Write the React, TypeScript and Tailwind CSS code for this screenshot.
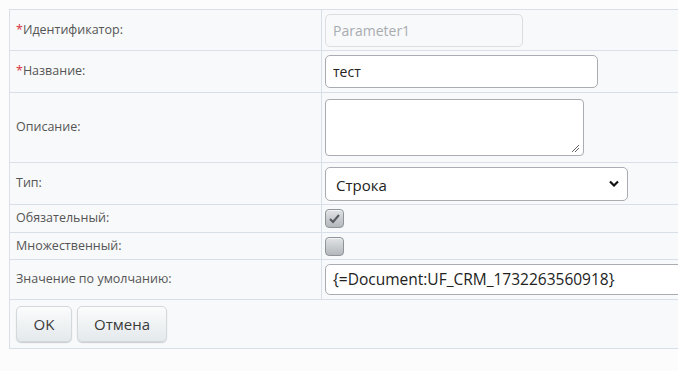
import React from "react";

const font = { fontFamily: '"Open Sans", "Noto Sans", sans-serif' };

function Row({
  label,
  required,
  h,
  children,
}: {
  label: string;
  required?: boolean;
  h: string;
  children: React.ReactNode;
}) {
  return (
    <div className={`flex border-b border-[#d9dfe8] ${h}`}>
      <div className="w-[312px] shrink-0 border-r border-[#d9dfe8] pl-[6px] flex items-center text-[12.5px] text-[#555]">
        {required && <span className="text-[#d9333f]">*</span>}
        {label}
      </div>
      <div className="flex-1 pl-[3px] flex items-center">{children}</div>
    </div>
  );
}

function Checkbox({ checked }: { checked?: boolean }) {
  return (
    <div className="w-[19px] h-[19px] rounded-[4px] border border-[#8f9499] bg-gradient-to-b from-[#e1e3e5] to-[#b4b8bc] flex items-center justify-center shadow-[inset_0_1px_0_#f3f4f5]">
      {checked && (
        <svg width="13" height="11" viewBox="0 0 13 11">
          <path d="M2 6 L5 9 L11 2" fill="none" stroke="#55595d" strokeWidth="2" />
        </svg>
      )}
    </div>
  );
}

export default function App() {
  return (
    <div className="w-[678px] h-[371px] overflow-hidden bg-[#fcfcfd] pt-[9px] pl-[9px]" style={font}>
      <div className="w-[720px] bg-[#f8f9fa] border-t border-l border-[#d9dfe8]">
        <Row label="Идентификатор:" required h="h-[41px]">
          <div className="w-[198px] h-[33px] mt-[1px] rounded-[5px] border border-[#dcdfe2] bg-[#f8f9fa] px-[7px] flex items-center text-[14px] text-[#a8acb0]">
            Parameter1
          </div>
        </Row>
        <Row label="Название:" required h="h-[42px]">
          <div className="w-[273px] h-[33px] rounded-[5px] border border-[#a9adb1] bg-white px-[7px] flex items-center text-[14px] text-[#222]">
            тест
          </div>
        </Row>
        <Row label="Описание:" h="h-[70px]">
          <div className="relative w-[259px] h-[57px] rounded-[4px] border border-[#a9adb1] bg-white">
            <svg className="absolute right-[3px] bottom-[2px]" width="9" height="9" viewBox="0 0 9 9">
              <path d="M1 8 L8 1 M4 8 L8 4" stroke="#666" strokeWidth="1" />
            </svg>
          </div>
        </Row>
        <Row label="Тип:" h="h-[42px]">
          <div className="w-[303px] h-[34px] rounded-[5px] border border-[#a9adb1] bg-white pl-[10px] pr-[8px] flex items-center justify-between text-[15px] text-[#222]">
            <span className="mt-[4px]">Строка</span>
            <svg width="10" height="7" viewBox="0 0 10 7">
              <path d="M1 1.5 L5 5.5 L9 1.5" fill="none" stroke="#111" strokeWidth="2.2" />
            </svg>
          </div>
        </Row>
        <Row label="Обязательный:" h="h-[28px]">
          <Checkbox checked />
        </Row>
        <Row label="Множественный:" h="h-[27px]">
          <Checkbox />
        </Row>
        <Row label="Значение по умолчанию:" h="h-[40px]">
          <div className="w-[400px] h-[31px] rounded-[5px] border border-[#a9adb1] bg-white px-[7px] flex items-center text-[15.5px] text-[#222]">
            {"{=Document:UF_CRM_1732263560918}"}
          </div>
        </Row>
        <div className="h-[49px] border-b border-[#d9dfe8] pl-[6px] flex items-center gap-[5px]">
          <button className="w-[56px] h-[36px] rounded-[5px] border border-[#d3d8dc] bg-gradient-to-b from-[#fbfcfc] to-[#e4e9ec] text-[15px] font-medium text-[#3a3a3a] shadow-[0_1px_1px_#c8cdd1]">
            OK
          </button>
          <button className="w-[90px] h-[36px] rounded-[5px] border border-[#d3d8dc] bg-gradient-to-b from-[#fbfcfc] to-[#e4e9ec] text-[15px] font-medium text-[#3a3a3a] shadow-[0_1px_1px_#c8cdd1]">
            Отмена
          </button>
        </div>
      </div>
    </div>
  );
}
